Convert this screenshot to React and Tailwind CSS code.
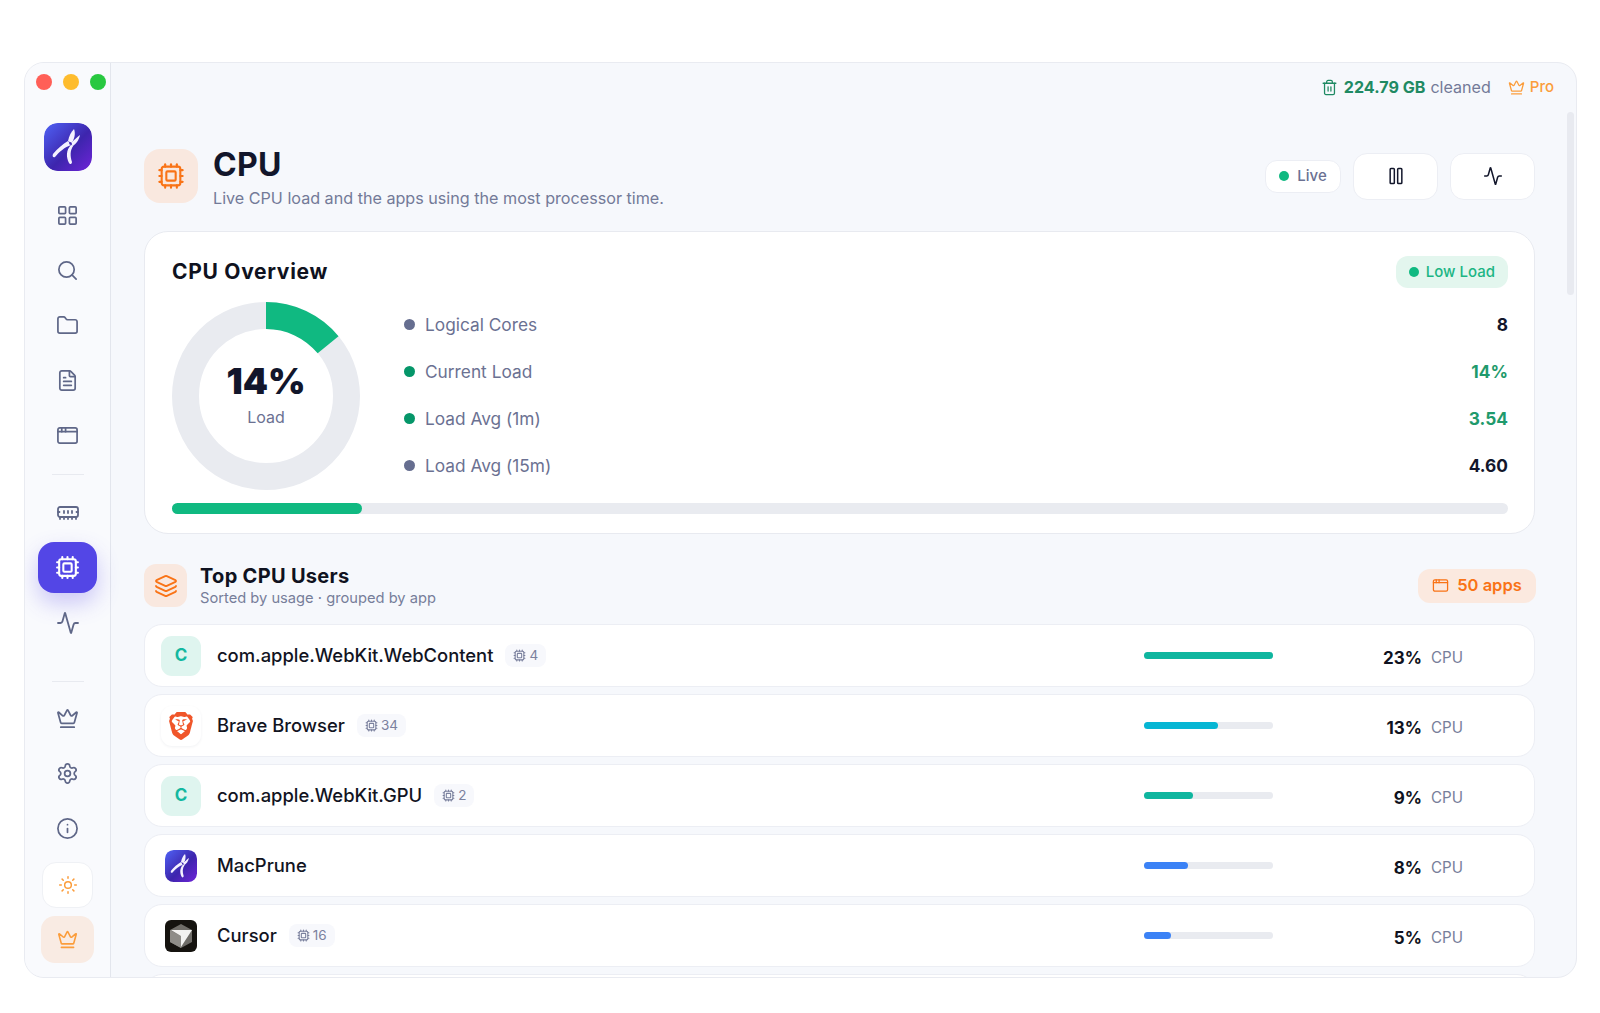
import React from 'react';
import { LayoutGrid, Search, Folder, FileText, AppWindow, MemoryStick, Cpu, Activity, Crown, Settings, Info, Sun, Trash2, Pause, Layers } from 'lucide-react';
import { SiBrave } from 'react-icons/si';

const HEADING = "font-['Inter',sans-serif]";

const topNav = [LayoutGrid, Search, Folder, FileText, AppWindow];
const bottomNav = [Crown, Settings, Info];

const stats = [
  { label: 'Logical Cores', value: '8', dot: 'bg-[#666e90]', text: 'text-[#12162b]' },
  { label: 'Current Load', value: '14%', dot: 'bg-[#059669]', text: 'text-[#1f9a6c]' },
  { label: 'Load Avg (1m)', value: '3.54', dot: 'bg-[#059669]', text: 'text-[#1f9a6c]' },
  { label: 'Load Avg (15m)', value: '4.60', dot: 'bg-[#666e90]', text: 'text-[#12162b]' },
];

const apps = [
  { name: 'com.apple.WebKit.WebContent', icon: 'c', threads: 4, pct: 23, width: 129, bar: 'bg-[#0fb69f]' },
  { name: 'Brave Browser', icon: 'brave', threads: 34, pct: 13, width: 74, bar: 'bg-[#06b6d4]' },
  { name: 'com.apple.WebKit.GPU', icon: 'c', threads: 2, pct: 9, width: 49, bar: 'bg-[#0fb69f]' },
  { name: 'MacPrune', icon: 'logo', pct: 8, width: 44, bar: 'bg-[#3b82f6]' },
  { name: 'Cursor', icon: 'cursor', threads: 16, pct: 5, width: 27, bar: 'bg-[#3b82f6]' },
];

const Logo = ({ size, id }) => (
  <svg width={size} height={size} viewBox="0 0 48 48">
    <defs>
      <linearGradient id={id} x1="0" y1="0" x2="1" y2="1">
        <stop offset="0" stopColor="#4f62f5" />
        <stop offset="0.55" stopColor="#3d25ad" />
        <stop offset="1" stopColor="#6f24d8" />
      </linearGradient>
    </defs>
    <rect width="48" height="48" rx="13" fill={`url(#${id})`} />
    <path d="M30 6 C32 11 30 17 27.5 20 L24 18 C25 13 27 9 30 6 Z" fill="#f4f1ff" />
    <path d="M36 12 C35 17 32 21 28.5 23 L27 20 C30 17 33 14 36 12 Z" fill="#f4f1ff" />
    <path d="M24 18 L27 22 C21 24 15 29 11 34 C9 35 8 33 9 31 C13 26 19 21 24 18 Z" fill="#f4f1ff" />
    <path d="M27 22 L29.5 22.5 C26 27 26 33 28 39 C28 41 26 42 25 40 C22 34 22 27 27 22 Z" fill="#f4f1ff" />
    <circle cx="26.5" cy="20.5" r="1.2" fill="#3d25ad" />
  </svg>
);

const CursorIcon = () => (
  <svg width="32" height="32" viewBox="0 0 32 32">
    <rect width="32" height="32" rx="6" fill="#15130f" />
    <path d="M16 4 L27 10 V22 L16 28 L5 22 V10 Z" fill="#6f6d68" />
    <path d="M5 10 L16 16 V28 L5 22 Z" fill="#8f8d88" />
    <path d="M6 10 L27 10 L16 27 L16 16 Z" fill="#f2f2f0" />
  </svg>
);

const AppIcon = ({ type }) => {
  if (type === 'c') {
    return (
      <div className={`flex h-10 w-10 items-center justify-center rounded-[11px] bg-[#dff5ef] text-[17px] font-bold text-[#14b8a0] ${HEADING}`}>
        C
      </div>
    );
  }
  return (
    <div className="flex h-10 w-10 items-center justify-center">
      {type === 'brave' && (
        <div className="flex h-10 w-10 items-center justify-center rounded-[11px] bg-white shadow-[0_1px_3px_rgba(20,30,60,0.06)]">
          <SiBrave className="text-[#f0562a]" size={28} />
        </div>
      )}
      {type === 'logo' && <div className="h-8 w-8 overflow-hidden rounded-md"><Logo size={32} id="logo-small" /></div>}
      {type === 'cursor' && <CursorIcon />}
    </div>
  );
};

const AppRow = ({ app }) => (
  <div className="flex h-[63px] items-center rounded-[18px] border border-[#eceef4] bg-white pl-4 pr-[73px]">
    <AppIcon type={app.icon} />
    <div className="ml-4 flex flex-1 items-center">
      <span className="text-[18.4px] font-medium text-[#12141f]">{app.name}</span>
      {app.threads && (
        <span className="ml-3 flex h-[23px] items-center gap-[3px] rounded-lg bg-[#f7f8fc] px-2 text-[13.5px] text-[#7b819e]">
          <Cpu size={13} />
          {app.threads}
        </span>
      )}
    </div>
    <div className="h-[7px] w-[129px] rounded-full bg-[#e9ebf0]">
      <div className={`h-full rounded-full ${app.bar}`} style={{ width: app.width }} />
    </div>
    <div className={`w-[149px] pt-[6px] text-right text-[17px] font-bold text-[#0f1220] ${HEADING}`}>{app.pct}%</div>
    <div className="ml-[9px] w-[30px] pt-[6px] text-[15.2px] text-[#777e9a]">CPU</div>
  </div>
);

export default function App() {
  return (
    <div className="h-[1013px] w-[1600px] overflow-hidden bg-white pl-6 pt-[62px] font-['Inter',sans-serif]">
      <div className="flex h-[916px] w-[1553px] overflow-hidden rounded-[20px] border border-[#e9ebf1] bg-[#f6f8fc]">
        <aside className="flex w-[86px] shrink-0 flex-col items-center border-r border-[#e3e6ed] bg-[#f9fafd] pt-[11px]">
          <div className="flex gap-[11px] self-start pl-[11px]">
            <span className="h-4 w-4 rounded-full bg-[#ff5f57]" />
            <span className="h-4 w-4 rounded-full bg-[#febc2e]" />
            <span className="h-4 w-4 rounded-full bg-[#28c840]" />
          </div>
          <div className="mt-[33px] h-12 w-12 overflow-hidden rounded-[14px]">
            <Logo size={48} id="logo-main" />
          </div>
          <nav className="mt-[17px] flex flex-col">
            {topNav.map((Icon, i) => (
              <div key={i} className="flex h-[55px] w-[59px] items-center justify-center text-[#5f6788]">
                <Icon size={23} strokeWidth={1.8} />
              </div>
            ))}
          </nav>
          <div className="mt-[11px] h-px w-8 bg-[#e8eaf0]" />
          <div className="mt-[10px] flex h-[55px] items-center justify-center text-[#5f6788]">
            <MemoryStick size={24} strokeWidth={1.8} />
          </div>
          <div className="flex h-[55px] w-[59px] items-center justify-center">
            <div className="flex h-[51px] w-[59px] items-center justify-center rounded-2xl bg-[#5346e6] text-white shadow-[0_10px_22px_rgba(83,70,230,0.28)]">
              <Cpu size={25} strokeWidth={2} />
            </div>
          </div>
          <div className="flex h-[55px] items-center justify-center text-[#5f6788]">
            <Activity size={24} strokeWidth={1.8} />
          </div>
          <div className="mt-[31px] h-px w-8 bg-[#e8eaf0]" />
          <nav className="mt-[9px] flex flex-col">
            {bottomNav.map((Icon, i) => (
              <div key={i} className="flex h-[55px] w-[59px] items-center justify-center text-[#5f6788]">
                <Icon size={23} strokeWidth={1.8} />
              </div>
            ))}
          </nav>
          <div className="mt-[6px] flex h-[46px] w-[51px] items-center justify-center rounded-[14px] border border-[#eff1f5] bg-white text-[#fb9d3c]">
            <Sun size={20} strokeWidth={1.8} />
          </div>
          <div className="mt-2 flex h-[47px] w-[53px] items-center justify-center rounded-[14px] bg-[#f9ebe3] text-[#fb9d3c]">
            <Crown size={21} strokeWidth={1.8} />
          </div>
        </aside>

        <main className="relative min-w-0 flex-1 overflow-hidden">
          <div className="absolute right-[2px] top-[49px] h-[183px] w-[7px] rounded-full bg-[#e8eaf0]" />

          <div className="flex h-[48px] items-center justify-end pr-[22px] text-[16.1px]">
            <Trash2 size={17} strokeWidth={1.8} className="text-[#1f8a63]" />
            <span className="ml-[6px] font-bold text-[#1f8a63]">224.79 GB</span>
            <span className="ml-[5px] text-[#737a98]">cleaned</span>
            <Crown size={17} strokeWidth={1.8} className="ml-[17px] text-[#fb9d3c]" />
            <span className="ml-[5px] text-[15px] font-medium text-[#fb9d3c]">Pro</span>
          </div>

          <div className="pl-[33px] pr-[41px] pt-[38px]">
            <header className="flex h-[54px] items-center">
              <div className="flex h-[54px] w-[54px] items-center justify-center rounded-2xl bg-[#f9e8df] text-[#f97316]">
                <Cpu size={28} strokeWidth={1.8} />
              </div>
              <div className="ml-[15px] flex-1 pt-1">
                <h1 className={`text-[32px] font-bold leading-[34px] tracking-[0.3px] text-[#12162b] ${HEADING}`}>CPU</h1>
                <p className="mt-[6px] text-[16.15px] leading-[20px] text-[#737a98]">Live CPU load and the apps using the most processor time.</p>
              </div>
              <div className="flex h-[33px] w-[76px] items-center justify-center gap-2 rounded-xl border border-[#eceef4] bg-white text-[15px] font-medium text-[#6b7192]">
                <span className="h-[10px] w-[10px] rounded-full bg-[#10b981]" />
                Live
              </div>
              <button className="ml-3 flex h-[47px] w-[85px] items-center justify-center rounded-[14px] border border-[#eceef4] bg-white text-[#12162b]">
                <Pause size={20} strokeWidth={1.8} />
              </button>
              <button className="ml-3 flex h-[47px] w-[85px] items-center justify-center rounded-[14px] border border-[#eceef4] bg-white text-[#12162b]">
                <Activity size={20} strokeWidth={1.8} />
              </button>
            </header>

            <section className="mt-7 h-[303px] rounded-3xl border border-[#e8eaf0] bg-white pl-[27px] pr-[26px] pt-6">
              <div className="flex h-8 items-center justify-between">
                <h2 className={`text-[21px] font-bold tracking-[0.7px] text-[#0f1220] ${HEADING}`}>CPU Overview</h2>
                <div className="flex h-8 items-center gap-[7px] rounded-xl bg-[#e3f6ee] px-[13px] text-[15px] font-medium text-[#1cb584]">
                  <span className="h-[10px] w-[10px] rounded-full bg-[#10b981]" />
                  Low Load
                </div>
              </div>
              <div className="mt-[14px] flex h-[188px]">
                <div className="relative h-[188px] w-[188px] shrink-0">
                  <svg width="188" height="188" viewBox="0 0 188 188" className="-rotate-90">
                    <circle cx="94" cy="94" r="80.5" fill="none" stroke="#e9ebf0" strokeWidth="27" />
                    <circle cx="94" cy="94" r="80.5" fill="none" stroke="#10b981" strokeWidth="27" strokeDasharray="70.8 505.8" />
                  </svg>
                  <div className="absolute inset-0 flex flex-col items-center justify-center pb-[6px]">
                    <span className={`text-[36px] font-black leading-[44px] text-[#12162b] ${HEADING}`}>14%</span>
                    <span className="mt-[4px] text-[16px] leading-5 text-[#6b7192]">Load</span>
                  </div>
                </div>
                <div className="ml-[44px] -mt-px flex-1">
                  {stats.map((s) => (
                    <div key={s.label} className="flex h-[47px] items-center text-[17.3px]">
                      <span className={`h-[11px] w-[11px] rounded-full ${s.dot}`} />
                      <span className="ml-[10px] flex-1 text-[#6b7192]">{s.label}</span>
                      <span className={`font-bold ${s.text}`}>{s.value}</span>
                    </div>
                  ))}
                </div>
              </div>
              <div className="mt-[13px] h-[11px] rounded-full bg-[#e9ebf0]">
                <div className="h-full w-[190px] rounded-full bg-[#10b981]" />
              </div>
            </section>

            <div className="mt-[30px] flex h-[43px] items-center">
              <div className="flex h-[43px] w-[43px] items-center justify-center rounded-xl bg-[#f9e8df] text-[#f97316]">
                <Layers size={24} strokeWidth={1.8} />
              </div>
              <div className="ml-[13px] flex-1">
                <h3 className={`text-[20px] font-bold leading-6 tracking-[0.3px] text-[#0f1220] ${HEADING}`}>Top CPU Users</h3>
                <p className="text-[14.7px] leading-5 text-[#777e9a]">Sorted by usage · grouped by app</p>
              </div>
              <div className={`-mr-px flex h-[34px] w-[118px] items-center justify-center gap-[8px] rounded-xl bg-[#fbe9df] text-[16.5px] font-semibold text-[#f97316] ${HEADING}`}>
                <AppWindow size={17} strokeWidth={1.8} />
                50 apps
              </div>
            </div>

            <div className="mt-[17px] flex flex-col gap-[7px]">
              {apps.map((app) => (
                <AppRow key={app.name} app={app} />
              ))}
              <div className="h-[63px] rounded-[18px] border border-[#eceef4] bg-white" />
            </div>
          </div>
        </main>
      </div>
    </div>
  );
}
